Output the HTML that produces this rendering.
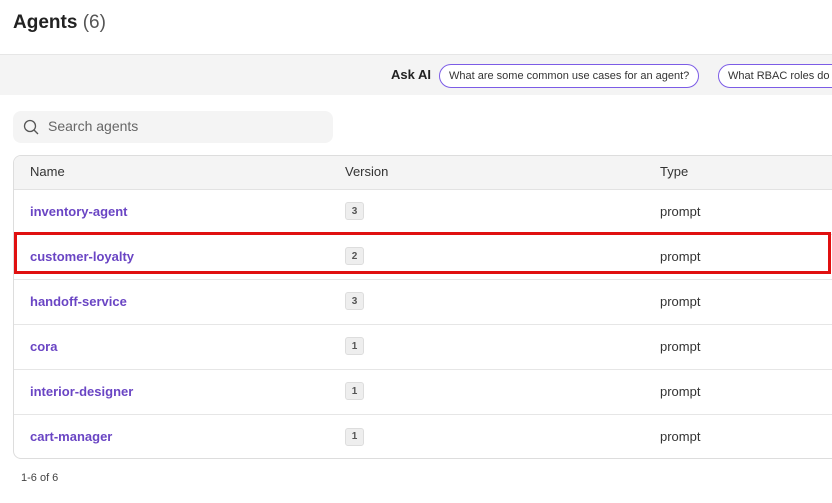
<!DOCTYPE html>
<html><head><style>
*{box-sizing:border-box;margin:0;padding:0}
html,body{width:832px;height:503px;overflow:hidden}
body{background:#fff;font-family:"Liberation Sans",sans-serif;color:#222;position:relative}
#w{position:absolute;left:0;top:0;width:832px;height:503px;overflow:hidden}
.t{position:absolute;left:13px;top:12px;font-size:19px;font-weight:bold;color:#222}
.t span{font-weight:normal;color:#555}
.bar{position:absolute;left:0;top:54px;width:832px;height:41px;background:#f4f4f4;border-top:1px solid #e6e6e6;overflow:hidden}
.ask{position:absolute;left:391px;top:12px;font-size:13px;font-weight:bold;color:#222}
.chip{position:absolute;top:9px;height:24px;border:1px solid #7c5ce6;border-radius:12px;font-size:11px;color:#333;padding:0 9px;line-height:22px;white-space:nowrap;background:#fff}
.search{position:absolute;left:13px;top:111px;width:320px;height:32px;background:#f4f4f4;border-radius:8px}
.search span{position:absolute;left:35px;top:7px;font-size:14px;color:#666}
.tbl{position:absolute;left:13px;top:155px;width:830px;height:304px;border:1px solid #ddd;border-radius:8px;overflow:hidden}
.hd{height:34px;background:#f4f4f4;border-bottom:1px solid #e2e2e2;position:relative;font-size:13px;color:#333}
.row{height:45px;border-bottom:1px solid #e6e6e6;position:relative;font-size:13px}
.row:last-child{border-bottom:none}
.c1,.c2,.c3{position:absolute;top:0;height:100%;display:flex;align-items:center;padding-bottom:2px}
.c1{left:16px}.c2{left:331px}.c3{left:646px;color:#333}
.n{color:#6a45c4;font-weight:bold}
.b{width:19px;height:18px;border:1px solid #ddd;background:#eee;border-radius:3px;font-size:10px;font-weight:bold;color:#555;display:flex;align-items:center;justify-content:center}
.red{position:absolute;left:14px;top:232px;width:817px;height:42px;border:3px solid #e01010}
.foot{position:absolute;left:21px;top:472px;font-size:11px;color:#444}
</style></head><body><div id="w">
<div class="t">Agents <span>(6)</span></div>
<div class="bar"><div class="ask">Ask AI</div>
<div class="chip" style="left:439px">What are some common use cases for an agent?</div>
<div class="chip" style="left:718px">What RBAC roles do you need</div></div>
<div class="search"><svg style="position:absolute;left:10px;top:8px" width="16" height="16" viewBox="0 0 16 16" fill="none" stroke="#555" stroke-width="1.3"><circle cx="7" cy="7" r="5.5"/><path d="M11 11l4 4"/></svg><span>Search agents</span></div>
<div class="tbl">
<div class="hd"><span class="c1">Name</span><span class="c2">Version</span><span class="c3">Type</span></div>
<div class="row"><span class="c1 n">inventory-agent</span><span class="c2"><span class="b">3</span></span><span class="c3">prompt</span></div>
<div class="row"><span class="c1 n">customer-loyalty</span><span class="c2"><span class="b">2</span></span><span class="c3">prompt</span></div>
<div class="row"><span class="c1 n">handoff-service</span><span class="c2"><span class="b">3</span></span><span class="c3">prompt</span></div>
<div class="row"><span class="c1 n">cora</span><span class="c2"><span class="b">1</span></span><span class="c3">prompt</span></div>
<div class="row"><span class="c1 n">interior-designer</span><span class="c2"><span class="b">1</span></span><span class="c3">prompt</span></div>
<div class="row"><span class="c1 n">cart-manager</span><span class="c2"><span class="b">1</span></span><span class="c3">prompt</span></div>
</div>
<div class="red"></div>
<div class="foot">1-6 of 6</div>
</div></body></html>
